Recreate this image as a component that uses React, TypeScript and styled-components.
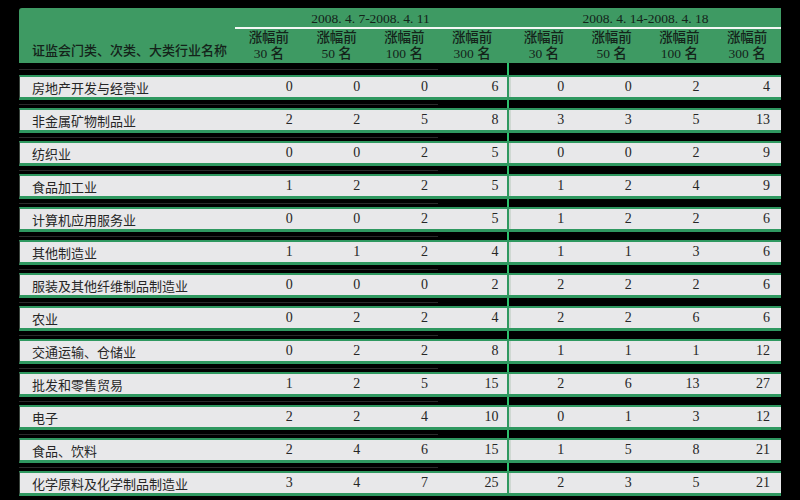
import React from 'react';
import styled, { createGlobalStyle } from 'styled-components';

const GlobalStyle = createGlobalStyle`
  html, body {
    margin: 0;
    padding: 0;
    background: #000;
  }
  body {
    width: 800px;
    height: 500px;
    overflow: hidden;
    font-family: 'Liberation Serif', 'Noto Sans CJK SC', serif;
  }
`;

const COLS = '216px repeat(4, 1fr) 4px repeat(4, 1fr)';
const PAD = [11, 11, 11, 8, 14, 14, 14, 11];

const rows: { name: string; a: number[]; b: number[] }[] = [
  { name: '房地产开发与经营业', a: [0, 0, 0, 6], b: [0, 0, 2, 4] },
  { name: '非金属矿物制品业', a: [2, 2, 5, 8], b: [3, 3, 5, 13] },
  { name: '纺织业', a: [0, 0, 2, 5], b: [0, 0, 2, 9] },
  { name: '食品加工业', a: [1, 2, 2, 5], b: [1, 2, 4, 9] },
  { name: '计算机应用服务业', a: [0, 0, 2, 5], b: [1, 2, 2, 6] },
  { name: '其他制造业', a: [1, 1, 2, 4], b: [1, 1, 3, 6] },
  { name: '服装及其他纤维制品制造业', a: [0, 0, 0, 2], b: [2, 2, 2, 6] },
  { name: '农业', a: [0, 2, 2, 4], b: [2, 2, 6, 6] },
  { name: '交通运输、仓储业', a: [0, 2, 2, 8], b: [1, 1, 1, 12] },
  { name: '批发和零售贸易', a: [1, 2, 5, 15], b: [2, 6, 13, 27] },
  { name: '电子', a: [2, 2, 4, 10], b: [0, 1, 3, 12] },
  { name: '食品、饮料', a: [2, 4, 6, 15], b: [1, 5, 8, 21] },
  { name: '化学原料及化学制品制造业', a: [3, 4, 7, 25], b: [2, 3, 5, 21] },
];

const ranks = ['30', '50', '100', '300'];

export default function App() {
  return (
    <>
      <GlobalStyle />
      <Page>
        <Table>
          <Header>
            <HeaderLabel>证监会门类、次类、大类行业名称</HeaderLabel>
            <DateCell $col={2}>2008. 4. 7-2008. 4. 11</DateCell>
            <DateCell $col={7}>2008. 4. 14-2008. 4. 18</DateCell>
            <WhiteRule />
            {[0, 1].map((g) =>
              ranks.map((r, i) => (
                <RankCell key={`${g}-${r}`} $col={g * 5 + i + 2}>
                  <span>涨幅前</span>
                  <span>{r} 名</span>
                </RankCell>
              )),
            )}
          </Header>
          {rows.map((row, idx) => (
            <Block key={row.name}>
              <Gap $first={idx === 0}>
                <GapLine />
                <GapBar />
              </Gap>
              <Row>
                <NameCell>{row.name}</NameCell>
                {row.a.map((v, i) => (
                  <NumCell key={`a${i}`} $pad={PAD[i]}>
                    {v}
                  </NumCell>
                ))}
                <Divider />
                {row.b.map((v, i) => (
                  <NumCell key={`b${i}`} $pad={PAD[i + 4]}>
                    {v}
                  </NumCell>
                ))}
              </Row>
            </Block>
          ))}
        </Table>
      </Page>
    </>
  );
}

const Page = styled.div`
  width: 800px;
  height: 500px;
  padding: 8px 0 0 19px;
  box-sizing: border-box;
`;

const Table = styled.div`
  width: 762px;
  display: flex;
  flex-direction: column;
`;

const Header = styled.div`
  display: grid;
  grid-template-columns: ${COLS};
  grid-template-rows: 19px 2px 34px;
  height: 55px;
  background: #3e9a63;
  border-radius: 3px 0 0 0;
  color: #14231a;
  font-size: 13px;
  box-sizing: border-box;
`;

const HeaderLabel = styled.div`
  grid-column: 1;
  grid-row: 1 / 4;
  display: flex;
  align-items: flex-end;
  padding: 0 0 4px 13px;
  font-family: 'Noto Sans CJK SC', serif;
  font-size: 13px;
  font-weight: 500;
  white-space: nowrap;
`;

const DateCell = styled.div<{ $col: number }>`
  grid-column: ${(p) => p.$col} / span 4;
  grid-row: 1;
  display: flex;
  align-items: center;
  justify-content: center;
  font-size: 13.5px;
  padding-top: 2px;
  white-space: nowrap;
`;

const WhiteRule = styled.div`
  grid-column: 2 / 11;
  grid-row: 2;
  background: #f4f8f5;
`;

const RankCell = styled.div<{ $col: number }>`
  grid-column: ${(p) => p.$col};
  grid-row: 3;
  display: flex;
  flex-direction: column;
  align-items: center;
  padding-top: 1px;
  line-height: 16px;
  font-family: 'Liberation Serif', 'Noto Sans CJK SC', serif;
  font-size: 13.5px;
  font-weight: 500;
  white-space: nowrap;
`;

const Block = styled.div`
  display: flex;
  flex-direction: column;
`;

const Gap = styled.div<{ $first: boolean }>`
  display: grid;
  grid-template-columns: ${COLS};
  height: ${(p) => (p.$first ? 12 : 8)}px;
  align-items: center;
`;

const GapLine = styled.div`
  grid-column: 1 / 5;
  height: 1px;
  background: #2b2b2b;
`;

const GapBar = styled.div`
  grid-column: 6;
  align-self: stretch;
  margin: 0 1px;
  background: #2cc26c;
`;

const Row = styled.div`
  display: grid;
  grid-template-columns: ${COLS};
  height: 20px;
  background: #e8e8ea;
  border-top: 2px solid #2f9860;
  border-bottom: 3px solid #2f9860;
  border-left: 1px solid #39433c;
  color: #262626;
`;

const NameCell = styled.div`
  display: flex;
  align-items: center;
  padding-left: 12px;
  font-family: 'Noto Sans CJK SC', serif;
  font-size: 13px;
  white-space: nowrap;
`;

const NumCell = styled.div<{ $pad: number }>`
  display: flex;
  align-items: center;
  justify-content: flex-end;
  padding-right: ${(p) => p.$pad}px;
  font-family: 'Liberation Serif', serif;
  font-size: 14px;
`;

const Divider = styled.div`
  background: linear-gradient(to right, #e8e8ea 0, #e8e8ea 0.5px, #2f9860 0.5px, #2f9860 2.5px, #cfd8d2 2.5px);
`;
